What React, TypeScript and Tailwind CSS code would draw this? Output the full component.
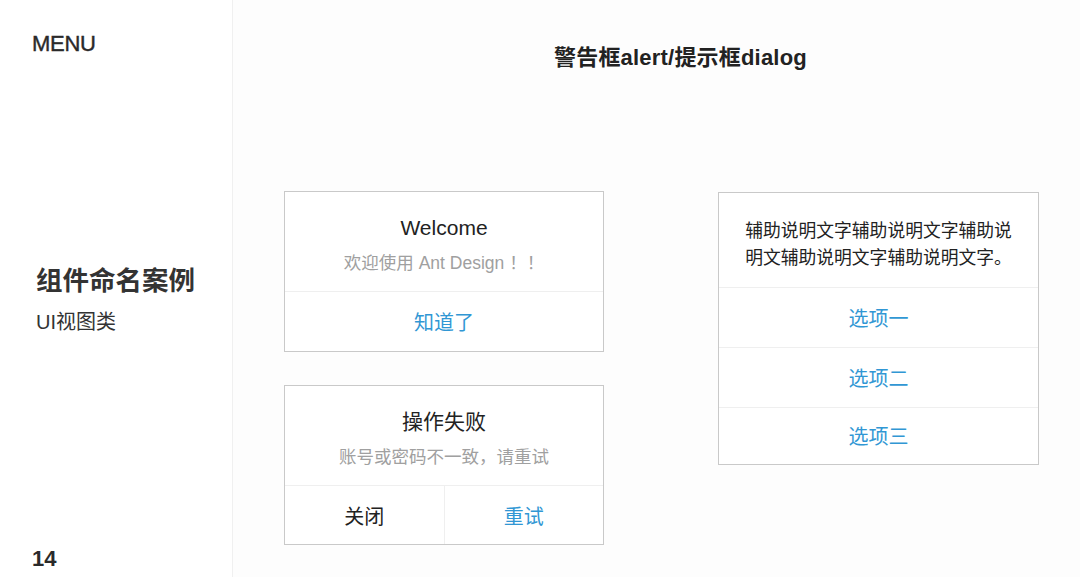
const font = "font-['Liberation_Sans','Noto_Sans_CJK_SC',sans-serif]";

function Sidebar() {
  return (
    <div className="w-[233px] shrink-0 border-r border-[#f0f0f0] bg-white flex flex-col pl-[32px] text-[#2a2a2a]">
      <div className="mt-[31px] text-[22px] leading-[26px] tracking-[-0.3px] [-webkit-text-stroke:0.4px_#2a2a2a]">MENU</div>
      <div className="mt-[209px] ml-[4px] text-[26.5px] leading-[30px] font-bold text-[#333]">组件命名案例</div>
      <div className="mt-[14px] ml-[4px] text-[20px] leading-[24px] text-[#333]">UI视图类</div>
      <div className="mt-auto mb-[6px] text-[22px] leading-[24px] font-semibold">14</div>
    </div>
  );
}

function AlertCard({ title, desc, children }: { title: string; desc: string; children: React.ReactNode }) {
  return (
    <div className="w-[320px] border border-[#c9c9c9] bg-white">
      <div className="flex flex-col items-center pt-[22px] pb-[16px]">
        <div className="text-[21px] leading-[28px] text-[#222]">{title}</div>
        <div className="mt-[9px] text-[17.5px] leading-[24px] text-[#a0a0a0] whitespace-pre">{desc}</div>
      </div>
      {children}
    </div>
  );
}

export default function App() {
  return (
    <div className={`flex w-[1080px] h-[577px] overflow-hidden bg-white ${font}`}>
      <Sidebar />
      <div className="flex-1 flex flex-col bg-[#fdfdfd] pl-[51px]">
        <div className="mt-[45px] ml-[270px] text-[22px] leading-[26px] font-semibold text-[#222] whitespace-nowrap tracking-[0.2px]">
          警告框alert/提示框dialog
        </div>
        <div className="mt-[120px] flex gap-[114px]">
          <div className="flex flex-col gap-[33px]">
            <AlertCard title="Welcome" desc="欢迎使用 Ant Design ！！">
              <div className="h-[60px] pt-[3px] border-t border-[#efefef] flex items-center justify-center text-[20px] text-[#3197d4]">
                知道了
              </div>
            </AlertCard>
            <AlertCard title="操作失败" desc="账号或密码不一致，请重试">
              <div className="h-[59px] pt-[3px] border-t border-[#efefef] flex text-[20px]">
                <div className="flex-1 flex items-center justify-center text-[#222] border-r border-[#efefef] -mt-[3px] pt-[3px]">关闭</div>
                <div className="flex-1 flex items-center justify-center text-[#3197d4]">重试</div>
              </div>
            </AlertCard>
          </div>
          <div className="mt-[1px] w-[321px] self-start border border-[#c9c9c9] bg-white">
            <div className="pt-[25px] pb-[15px] text-center text-[17.8px] leading-[27px] text-[#222] whitespace-nowrap">
              辅助说明文字辅助说明文字辅助说
              <br />
              明文辅助说明文字辅助说明文字。
            </div>
            {["选项一", "选项二", "选项三"].map((o, i) => (
              <div
                key={o}
                className={`border-t border-[#efefef] pt-[2px] flex items-center justify-center text-[20px] text-[#3197d4] ${
                  i === 2 ? "h-[57px]" : "h-[60px]"
                }`}
              >
                {o}
              </div>
            ))}
          </div>
        </div>
      </div>
    </div>
  );
}
